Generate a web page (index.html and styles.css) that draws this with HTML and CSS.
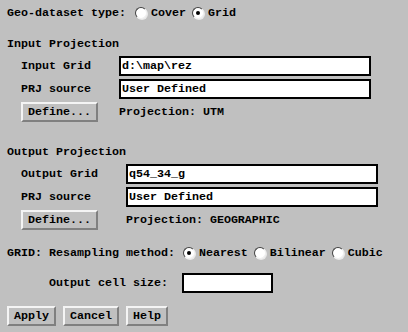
FILE: index.html
```html
<!DOCTYPE html>
<html lang="en">
<head>
    <meta charset="UTF-8">
    <title>Grid Projection</title>
    <link rel="stylesheet" href="styles.css">
</head>
<body>
    <div class="dialog">
        <div class="choice-row">
            <span class="choice-label">Geo-dataset type:</span>
            <span class="option"><span class="radio"></span>Cover</span>
            <span class="option"><span class="radio checked"></span>Grid</span>
        </div>

        <div class="section-title">Input Projection</div>
        <div class="form-grid">
            <label>Input Grid</label>
            <input type="text" class="field" value="d:\map\rez">
            <label>PRJ source</label>
            <input type="text" class="field" value="User Defined">
            <div class="define-cell"><button>Define...</button></div>
            <span class="proj">Projection: UTM</span>
        </div>

        <div class="section-title">Output Projection</div>
        <div class="form-grid">
            <label>Output Grid</label>
            <input type="text" class="field" value="q54_34_g">
            <label>PRJ source</label>
            <input type="text" class="field" value="User Defined">
            <div class="define-cell"><button>Define...</button></div>
            <span class="proj">Projection: GEOGRAPHIC</span>
        </div>

        <div class="choice-row resample">
            <span class="choice-label">GRID: Resampling method:</span>
            <span class="option"><span class="radio checked"></span>Nearest</span>
            <span class="option"><span class="radio"></span>Bilinear</span>
            <span class="option"><span class="radio"></span>Cubic</span>
        </div>

        <div class="cell-row">
            <label>Output cell size:</label>
            <input type="text" class="field small" value="">
        </div>

        <div class="actions">
            <button>Apply</button>
            <button>Cancel</button>
            <button>Help</button>
        </div>
    </div>
</body>
</html>
```

FILE: styles.css
```css
body {
    margin: 0;
    background-color: #c0c0c0;
    font-family: "Liberation Mono", "Courier New", monospace;
    font-weight: bold;
    font-size: 11.67px;
    color: #000;
}
.dialog {
    padding: 0 7px;
}
.choice-row {
    display: flex;
    align-items: center;
    height: 25px;
    white-space: pre;
}
.choice-label {
    margin-right: 9px;
}
.option {
    display: flex;
    align-items: center;
    margin-right: 6px;
}
.radio {
    box-sizing: border-box;
    width: 12px;
    height: 12px;
    margin-right: 4px;
    border-radius: 50%;
    border: 1px solid;
    border-color: #404040 #f0f0f0 #f0f0f0 #404040;
    background-color: white;
    box-shadow: 1px 1px 0 #e8e8e8;
    display: flex;
    align-items: center;
    justify-content: center;
}
.radio.checked::after {
    content: "";
    width: 4px;
    height: 4px;
    border-radius: 50%;
    background-color: black;
}
.section-title {
    line-height: 14px;
    margin: 12px 0 5px;
}
.form-grid + .section-title {
    margin-top: 23px;
}
.form-grid {
    display: grid;
    grid-template-columns: max-content 252px;
    grid-auto-rows: 20px;
    column-gap: 28px;
    row-gap: 3px;
    align-items: center;
    padding-left: 14px;
}
.define-cell {
    width: 0;
    white-space: nowrap;
}
.field {
    box-sizing: border-box;
    height: 20px;
    width: 100%;
    margin: 0;
    padding: 0 1px;
    border: 2px solid black;
    background-color: white;
    font: inherit;
    color: black;
    outline: none;
}
.proj {
    white-space: pre;
}
button {
    box-sizing: border-box;
    height: 20px;
    margin: 0;
    padding: 0 5px;
    border: 2px solid;
    border-color: #f4f4f4 #808080 #808080 #f4f4f4;
    background-color: #c0c0c0;
    font: inherit;
    color: black;
    cursor: pointer;
}
.resample {
    height: 20px;
    margin-top: 13px;
}
.resample .choice-label {
    margin-right: 8px;
}
.cell-row {
    display: flex;
    align-items: center;
    gap: 14px;
    margin-top: 10px;
    padding-left: 42px;
}
.field.small {
    width: 91px;
}
.actions {
    display: flex;
    gap: 7px;
    margin-top: 13px;
}
```
